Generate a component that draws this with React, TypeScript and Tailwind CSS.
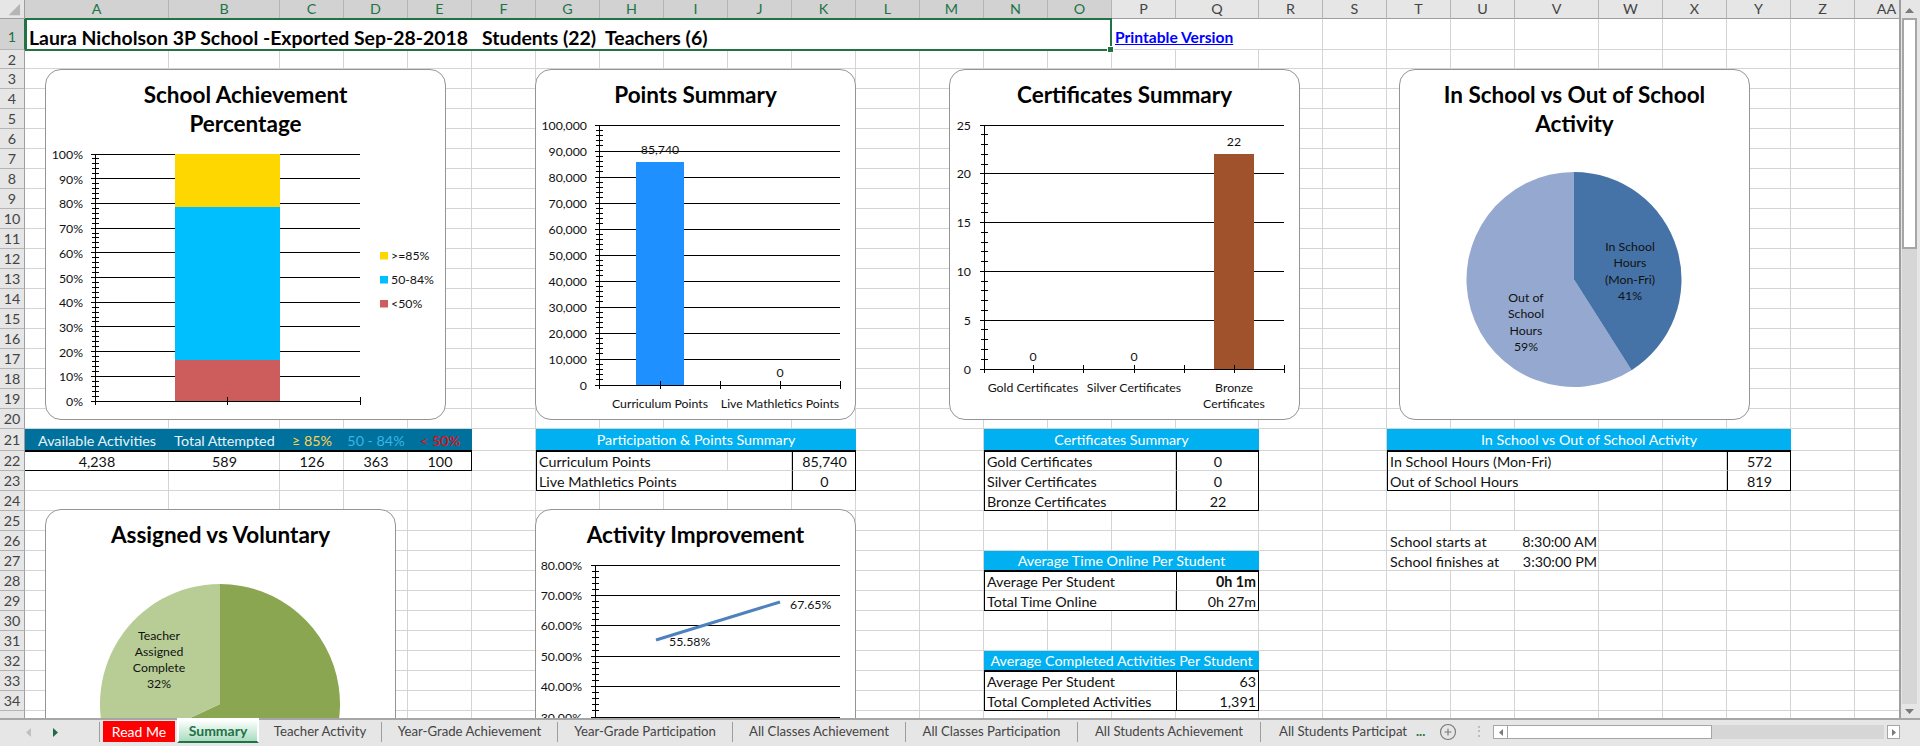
import { CirclePlus } from "lucide-react";

const columns = ["A","B","C","D","E","F","G","H","I","J","K","L","M","N","O","P","Q","R","S","T","U","V","W","X","Y","Z","AA"];
const rowCount = 35;

const labelCell = "flex items-center overflow-hidden whitespace-nowrap bg-white px-[3px] pt-[2px] border-b border-[#d4d4d4]";
const valueCell = "flex items-center whitespace-nowrap bg-white px-[3px] pt-[2px] border-b border-[#d4d4d4] border-l border-l-black";
const blueHead = "flex items-center justify-center whitespace-nowrap bg-[#00b0f0] pt-[1px] text-white border-b border-black";
const tealHead = "flex items-center justify-center whitespace-nowrap bg-[#00719c] pt-[2px] border-b border-black";
const frame = "border border-black pointer-events-none";

function Ticks({ x, x2, top, step, count }: { x: number; x2: number; top: number; step: number; count: number }) {
  const lines = [];
  for (let i = 0; i <= count; i++) {
    const y = top + i * step;
    lines.push(<line key={`g${i}`} x1={x - 4} x2={x2} y1={y} y2={y} />);
    if (i < count) {
      for (let m = 1; m < 5; m++) {
        const my = y + (m * step) / 5;
        lines.push(<line key={`m${i}-${m}`} x1={x - 3} x2={x + 4} y1={my} y2={my} />);
      }
    }
  }
  return (
    <g stroke="#000" strokeWidth="1" shapeRendering="crispEdges">
      {lines}
      <line x1={x} x2={x} y1={top} y2={top + count * step} />
    </g>
  );
}

function XTicks({ y, xs }: { y: number; xs: number[] }) {
  return (
    <g stroke="#000" strokeWidth="1" shapeRendering="crispEdges">
      {xs.map((x) => (
        <line key={x} x1={x} x2={x} y1={y - 4} y2={y + 4} />
      ))}
    </g>
  );
}

function Label({ x, y, anchor = "middle", children }: { x: number; y: number; anchor?: "start" | "middle" | "end"; children: string }) {
  return (
    <text x={x} y={y} textAnchor={anchor} dominantBaseline="central" fontSize="12.3" fill="#111">
      {children}
    </text>
  );
}

function Card({ className, box, title, children }: { className: string; box: string; title: string[]; children: React.ReactNode }) {
  return (
    <div className={`absolute overflow-hidden rounded-2xl bg-white outline-[1.5px] -outline-offset-[1.5px] outline-[#949494] ${className}`}>
      <svg className="absolute inset-0 size-full" viewBox={box}>
        {children}
      </svg>
      <div className="relative pt-[11px] text-center text-[22.5px] leading-[29px] font-bold text-black">
        {title.map((t) => (
          <div key={t}>{t}</div>
        ))}
      </div>
    </div>
  );
}

function wedge(cx: number, cy: number, r: number, from: number, to: number) {
  const a = (from * Math.PI) / 180;
  const b = (to * Math.PI) / 180;
  const large = to - from > 180 ? 1 : 0;
  return `M${cx} ${cy}L${cx + r * Math.sin(a)} ${cy - r * Math.cos(a)}A${r} ${r} 0 ${large} 1 ${cx + r * Math.sin(b)} ${cy - r * Math.cos(b)}Z`;
}

function Charts() {
  const pct = ["100%","90%","80%","70%","60%","50%","40%","30%","20%","10%","0%"];
  const pts = ["100,000","90,000","80,000","70,000","60,000","50,000","40,000","30,000","20,000","10,000","0"];
  return (
    <>
      <Card className="left-[45px] top-[69px] h-[351px] w-[401px]" box="45 69 401 351" title={["School Achievement", "Percentage"]}>
        <Ticks x={95} x2={360} top={154} step={24.7} count={10} />
        {pct.map((p, i) => (
          <Label key={p} x={83} y={154.5 + i * 24.7} anchor="end">{p}</Label>
        ))}
        <rect x="175" y="154" width="105" height="53" fill="#ffd700" />
        <rect x="175" y="207" width="105" height="153" fill="#00bfff" />
        <rect x="175" y="360" width="105" height="41" fill="#cd5c5c" />
        <XTicks y={401} xs={[95, 227.5, 360]} />
        <rect x="380" y="252" width="8" height="7.5" fill="#ffd700" />
        <Label x={391} y={255} anchor="start">{">=85%"}</Label>
        <rect x="380" y="276" width="8" height="7.5" fill="#00bfff" />
        <Label x={391} y={279} anchor="start">50-84%</Label>
        <rect x="380" y="300" width="8" height="7.5" fill="#cd5c5c" />
        <Label x={391} y={303} anchor="start">{"<50%"}</Label>
      </Card>

      <Card className="left-[535px] top-[69px] h-[351px] w-[321px]" box="535 69 321 351" title={["Points Summary"]}>
        <Ticks x={599} x2={840} top={125} step={26} count={10} />
        {pts.map((p, i) => (
          <Label key={p} x={587} y={125 + i * 26} anchor="end">{p}</Label>
        ))}
        <rect x="636" y="162" width="48" height="223" fill="#1e90ff" />
        <XTicks y={385} xs={[599, 660, 720, 780, 840]} />
        <Label x={660} y={149}>85,740</Label>
        <Label x={780} y={372}>0</Label>
        <Label x={660} y={403}>Curriculum Points</Label>
        <Label x={780} y={403}>Live Mathletics Points</Label>
      </Card>

      <Card className="left-[949px] top-[69px] h-[351px] w-[351px]" box="949 69 351 351" title={["Certificates Summary"]}>
        <Ticks x={984} x2={1284} top={125} step={48.8} count={5} />
        {["25","20","15","10","5","0"].map((p, i) => (
          <Label key={p} x={971} y={125 + i * 48.8} anchor="end">{p}</Label>
        ))}
        <rect x="1214" y="154" width="40" height="215" fill="#a0522d" />
        <XTicks y={369} xs={[984, 1033, 1083, 1134, 1184, 1234, 1284]} />
        <Label x={1234} y={141}>22</Label>
        <Label x={1033} y={356}>0</Label>
        <Label x={1134} y={356}>0</Label>
        <Label x={1033} y={387}>Gold Certificates</Label>
        <Label x={1134} y={387}>Silver Certificates</Label>
        <Label x={1234} y={387}>Bronze</Label>
        <Label x={1234} y={403}>Certificates</Label>
      </Card>

      <Card className="left-[1399px] top-[69px] h-[351px] w-[351px]" box="1399 69 351 351" title={["In School vs Out of School", "Activity"]}>
        <path d={wedge(1574, 279.5, 107.5, 147.6, 360)} fill="#95a9d0" />
        <path d={wedge(1574, 279.5, 107.5, 0, 147.6)} fill="#4573a7" />
        {["In School", "Hours", "(Mon-Fri)", "41%"].map((t, i) => (
          <Label key={t} x={1630} y={246 + i * 16.5}>{t}</Label>
        ))}
        {["Out of", "School", "Hours", "59%"].map((t, i) => (
          <Label key={t} x={1526} y={297 + i * 16.5}>{t}</Label>
        ))}
      </Card>

      <Card className="left-[45px] top-[509px] h-[351px] w-[351px]" box="45 509 351 351" title={["Assigned vs Voluntary"]}>
        <path d={wedge(220, 704, 120, 0, 244.8)} fill="#8aa650" />
        <path d={wedge(220, 704, 120, 244.8, 360)} fill="#b7cd95" />
        {["Teacher", "Assigned", "Complete", "32%"].map((t, i) => (
          <Label key={t} x={159} y={635 + i * 16.3}>{t}</Label>
        ))}
      </Card>

      <Card className="left-[535px] top-[509px] h-[351px] w-[321px]" box="535 509 321 351" title={["Activity Improvement"]}>
        <Ticks x={595} x2={840} top={565} step={30.4} count={5} />
        {["80.00%","70.00%","60.00%","50.00%","40.00%","30.00%"].map((p, i) => (
          <Label key={p} x={582} y={565 + i * 30.4} anchor="end">{p}</Label>
        ))}
        <line x1="656" y1="640" x2="780" y2="602" stroke="#4f81bd" strokeWidth="3" />
        <Label x={790} y={604} anchor="start">67.65%</Label>
        <Label x={669} y={641} anchor="start">55.58%</Label>
      </Card>
    </>
  );
}

function Sheet() {
  return (
    <div className="relative min-w-0 flex-1 overflow-hidden">
      <div className="grid h-[738px] w-[1920px] grid-cols-[25px_144px_111px_repeat(14,64px)_83px_repeat(4,64px)_84px_repeat(4,64px)_64px] grid-rows-[19px_31px_19px_repeat(18,20px)_22px_repeat(14,20px)] text-[14.3px] text-[#111]">
        {/* corner and headers */}
        <div className="border-r border-b border-[#9e9e9e] bg-[#e6e6e6]">
          <svg viewBox="0 0 25 19" className="size-full">
            <polygon points="21,4 21,16 9,16" fill="#b5b5b5" />
          </svg>
        </div>
        {columns.map((c, i) => (
          <div
            key={c}
            className={
              i < 15
                ? "flex items-center justify-center border-r border-b border-r-[#b5b5b5] border-b-[#217346] bg-[#d2d2d2] text-[#217346]"
                : "flex items-center justify-center border-r border-b border-r-[#b5b5b5] border-b-[#9e9e9e] bg-[#e6e6e6] text-[#444]"
            }
          >
            {c}
          </div>
        ))}
        {Array.from({ length: rowCount }, (_, r) => (
          <div
            key={r}
            className={
              r === 0
                ? "flex items-center justify-center border-r border-b border-r-[#217346] border-b-[#b5b5b5] bg-[#d2d2d2] pt-[6px] text-[#217346]"
                : "flex items-center justify-center border-r border-b border-r-[#9e9e9e] border-b-[#b5b5b5] bg-[#e6e6e6] pt-[1px] text-[#444]"
            }
            style={{ gridColumn: 1, gridRow: r + 2 }}
          >
            {r < 34 ? r + 1 : ""}
          </div>
        ))}
        {/* gridlines */}
        {Array.from({ length: rowCount }, (_, r) =>
          columns.map((c, i) => (
            <div key={`${c}${r}`} className="border-r border-b border-[#d4d4d4] bg-white" style={{ gridColumn: i + 2, gridRow: r + 2 }} />
          ))
        )}

        {/* row 1 */}
        <div className="relative z-10 col-[2/17] row-[2] -my-px flex items-center border-2 border-[#217346] bg-white pt-[6px] pl-[2px] text-[19.4px] font-bold whitespace-pre text-black">
          {"Laura Nicholson 3P School -Exported Sep-28-2018   Students (22)  Teachers (6)"}
          <span className="absolute -right-[4px] -bottom-[4px] size-[7px] border border-white bg-[#217346]" />
        </div>
        <div className="col-[17/19] row-[2] flex items-end border-b border-[#d4d4d4] bg-white pl-[3px] text-[15.6px] font-bold text-[#0000ff] underline">
          Printable Version
        </div>

        {/* achievement table */}
        <div className={`col-[2] row-[22] text-[#e6f4fa] ${tealHead}`}>Available Activities</div>
        <div className={`col-[3] row-[22] text-[#e6f4fa] ${tealHead}`}>Total Attempted</div>
        <div className={`col-[4] row-[22] text-[#ffd24d] ${tealHead}`}>≥ 85%</div>
        <div className={`col-[5] row-[22] text-[#38b6e8] ${tealHead}`}>50 - 84%</div>
        <div className={`col-[6] row-[22] text-[#ff0000] ${tealHead}`}>{"< 50%"}</div>
        <div className="col-[2] row-[23] text-center leading-[22px]">4,238</div>
        <div className="col-[3] row-[23] text-center leading-[22px]">589</div>
        <div className="col-[4] row-[23] text-center leading-[22px]">126</div>
        <div className="col-[5] row-[23] text-center leading-[22px]">363</div>
        <div className="col-[6] row-[23] text-center leading-[22px]">100</div>
        <div className={`col-[2/7] row-[23] border-l-0 ${frame}`} />

        {/* points table */}
        <div className={`col-[8/13] row-[22] ${blueHead}`}>{"Participation & Points Summary"}</div>
        <div className={`col-[8/10] row-[23] ${labelCell}`}>Curriculum Points</div>
        <div className={`col-[12] row-[23] justify-center ${valueCell}`}>85,740</div>
        <div className={`col-[8/11] row-[24] ${labelCell}`}>Live Mathletics Points</div>
        <div className={`col-[12] row-[24] justify-center ${valueCell}`}>0</div>
        <div className={`col-[8/13] row-[23/25] ${frame}`} />

        {/* certificates table */}
        <div className={`col-[15/19] row-[22] ${blueHead}`}>Certificates Summary</div>
        <div className={`col-[15/17] row-[23] ${labelCell}`}>Gold Certificates</div>
        <div className={`col-[18] row-[23] justify-center ${valueCell}`}>0</div>
        <div className={`col-[15/17] row-[24] ${labelCell}`}>Silver Certificates</div>
        <div className={`col-[18] row-[24] justify-center ${valueCell}`}>0</div>
        <div className={`col-[15/17] row-[25] ${labelCell}`}>Bronze Certificates</div>
        <div className={`col-[18] row-[25] justify-center ${valueCell}`}>22</div>
        <div className={`col-[15/19] row-[23/26] ${frame}`} />

        {/* time online table */}
        <div className={`col-[15/19] row-[28] ${blueHead}`}>Average Time Online Per Student</div>
        <div className={`col-[15/18] row-[29] ${labelCell}`}>Average Per Student</div>
        <div className={`col-[18] row-[29] justify-end font-bold ${valueCell}`}>0h 1m</div>
        <div className={`col-[15/17] row-[30] ${labelCell}`}>Total Time Online</div>
        <div className={`col-[18] row-[30] justify-end ${valueCell}`}>0h 27m</div>
        <div className={`col-[15/19] row-[29/31] ${frame}`} />

        {/* completed activities table */}
        <div className={`col-[15/19] row-[33] ${blueHead}`}>Average Completed Activities Per Student</div>
        <div className={`col-[15/18] row-[34] ${labelCell}`}>Average Per Student</div>
        <div className={`col-[18] row-[34] justify-end ${valueCell}`}>63</div>
        <div className={`col-[15/18] row-[35] ${labelCell}`}>Total Completed Activities</div>
        <div className={`col-[18] row-[35] justify-end ${valueCell}`}>1,391</div>
        <div className={`col-[15/19] row-[34/36] ${frame}`} />

        {/* in school table */}
        <div className={`col-[21/27] row-[22] ${blueHead}`}>In School vs Out of School Activity</div>
        <div className={`col-[21/24] row-[23] ${labelCell}`}>In School Hours (Mon-Fri)</div>
        <div className={`col-[26] row-[23] justify-center ${valueCell}`}>572</div>
        <div className={`col-[21/24] row-[24] ${labelCell}`}>Out of School Hours</div>
        <div className={`col-[26] row-[24] justify-center ${valueCell}`}>819</div>
        <div className={`col-[21/27] row-[23/25] ${frame}`} />

        {/* school hours */}
        <div className={`col-[21/23] row-[27] ${labelCell}`}>School starts at</div>
        <div className={`col-[23] row-[27] justify-end border-r pr-[1px] border-[#d4d4d4] ${labelCell}`}>8:30:00 AM</div>
        <div className={`col-[21/23] row-[28] ${labelCell}`}>School finishes at</div>
        <div className={`col-[23] row-[28] justify-end border-r pr-[1px] border-[#d4d4d4] ${labelCell}`}>3:30:00 PM</div>
      </div>
      <div className="pointer-events-none absolute inset-0 z-20">
        <Charts />
      </div>
    </div>
  );
}

function VerticalScrollbar() {
  return (
    <div className="flex w-[21px] flex-none flex-col items-end border-l-2 border-[#9e9e9e] bg-[#e6e6e6] pr-[3px]">
      <div className="mt-[3px] flex h-[14px] w-[15px] items-center justify-center">
        <svg width="9" height="5" viewBox="0 0 9 5"><polygon points="4.5,0 9,5 0,5" fill="#7a7a7a" /></svg>
      </div>
      <div className="mt-[1px] h-[231px] w-[15px] flex-none border-2 border-[#a6a6a6] bg-white" />
      <div className="w-[15px] flex-1 bg-[#d6d6d6]" />
      <div className="flex h-[14px] w-[15px] flex-none items-center justify-center">
        <svg width="9" height="5" viewBox="0 0 9 5"><polygon points="0,0 9,0 4.5,5" fill="#7a7a7a" /></svg>
      </div>
    </div>
  );
}

function Tab({ width, children }: { width: string; children: string }) {
  return (
    <div className={`mt-[2px] flex h-[20px] flex-none items-center justify-center border-r border-[#9e9e9e] text-[13.2px] whitespace-nowrap text-[#444] ${width}`}>
      {children}
    </div>
  );
}

function TabBar() {
  return (
    <div className="flex h-[28px] flex-none items-start border-t-2 border-[#a6a6a6] bg-[#e6e6e6]">
      <div className="mt-[2px] flex h-[20px] w-[100px] flex-none items-center gap-[22px] border-r border-[#9e9e9e] pl-[26px]">
        <svg width="5" height="9" viewBox="0 0 5 9"><polygon points="5,0 5,9 0,4.5" fill="#c0c0c0" /></svg>
        <svg width="5" height="9" viewBox="0 0 5 9"><polygon points="0,0 5,4.5 0,9" fill="#1e6b47" /></svg>
      </div>
      <div className="mt-[1px] ml-[3px] flex h-[21px] w-[72px] flex-none items-center justify-center bg-[#ff0000] text-[14px] text-white">Read Me</div>
      <div className="-mt-[2px] ml-[2px] flex h-[25px] w-[82px] flex-none items-center justify-center border-x-2 border-t-2 border-b-2 border-white border-b-[#217346] bg-gradient-to-b from-white to-[#a9dcc0] text-[14px] font-bold text-[#217346]">Summary</div>
      <Tab width="w-[123px]">Teacher Activity</Tab>
      <Tab width="w-[176px]">Year-Grade Achievement</Tab>
      <Tab width="w-[175px]">Year-Grade Participation</Tab>
      <Tab width="w-[173px]">All Classes Achievement</Tab>
      <Tab width="w-[172px]">All Classes Participation</Tab>
      <Tab width="w-[183px]">All Students Achievement</Tab>
      <div className="mt-[2px] ml-[18px] flex h-[20px] w-[127px] flex-none items-center text-[13.2px] whitespace-nowrap text-[#444]">All Students Participat</div>
      <div className="mt-[2px] ml-[10px] w-[15px] flex-none text-[13px] font-bold text-[#217346]">...</div>
      <CirclePlus className="mt-[3px] ml-[8px] flex-none text-[#777]" size={18} strokeWidth={1.5} />
      <div className="mt-[8px] ml-[16px] w-[8px] flex-none text-center text-[12px] leading-[6px] text-[#aaa]">⋮</div>
      <div className="mt-[5px] ml-[12px] flex h-[14px] flex-none items-stretch">
        <div className="flex w-[15px] items-center justify-center border border-[#a6a6a6] bg-white">
          <svg width="4" height="7" viewBox="0 0 4 7"><polygon points="4,0 4,7 0,3.5" fill="#7a7a7a" /></svg>
        </div>
        <div className="w-[204px] border-y border-r border-[#a6a6a6] bg-white" />
        <div className="w-[172px] bg-[#d6d6d6]" />
        <div className="ml-[3px] flex w-[13px] items-center justify-center border border-[#a6a6a6] bg-white">
          <svg width="4" height="7" viewBox="0 0 4 7"><polygon points="0,0 4,3.5 0,7" fill="#7a7a7a" /></svg>
        </div>
      </div>
    </div>
  );
}

export default function App() {
  return (
    <div className="flex h-[746px] w-[1920px] flex-col overflow-hidden bg-white font-['Lato',sans-serif]">
      <div className="flex min-h-0 flex-1">
        <Sheet />
        <VerticalScrollbar />
      </div>
      <TabBar />
    </div>
  );
}
